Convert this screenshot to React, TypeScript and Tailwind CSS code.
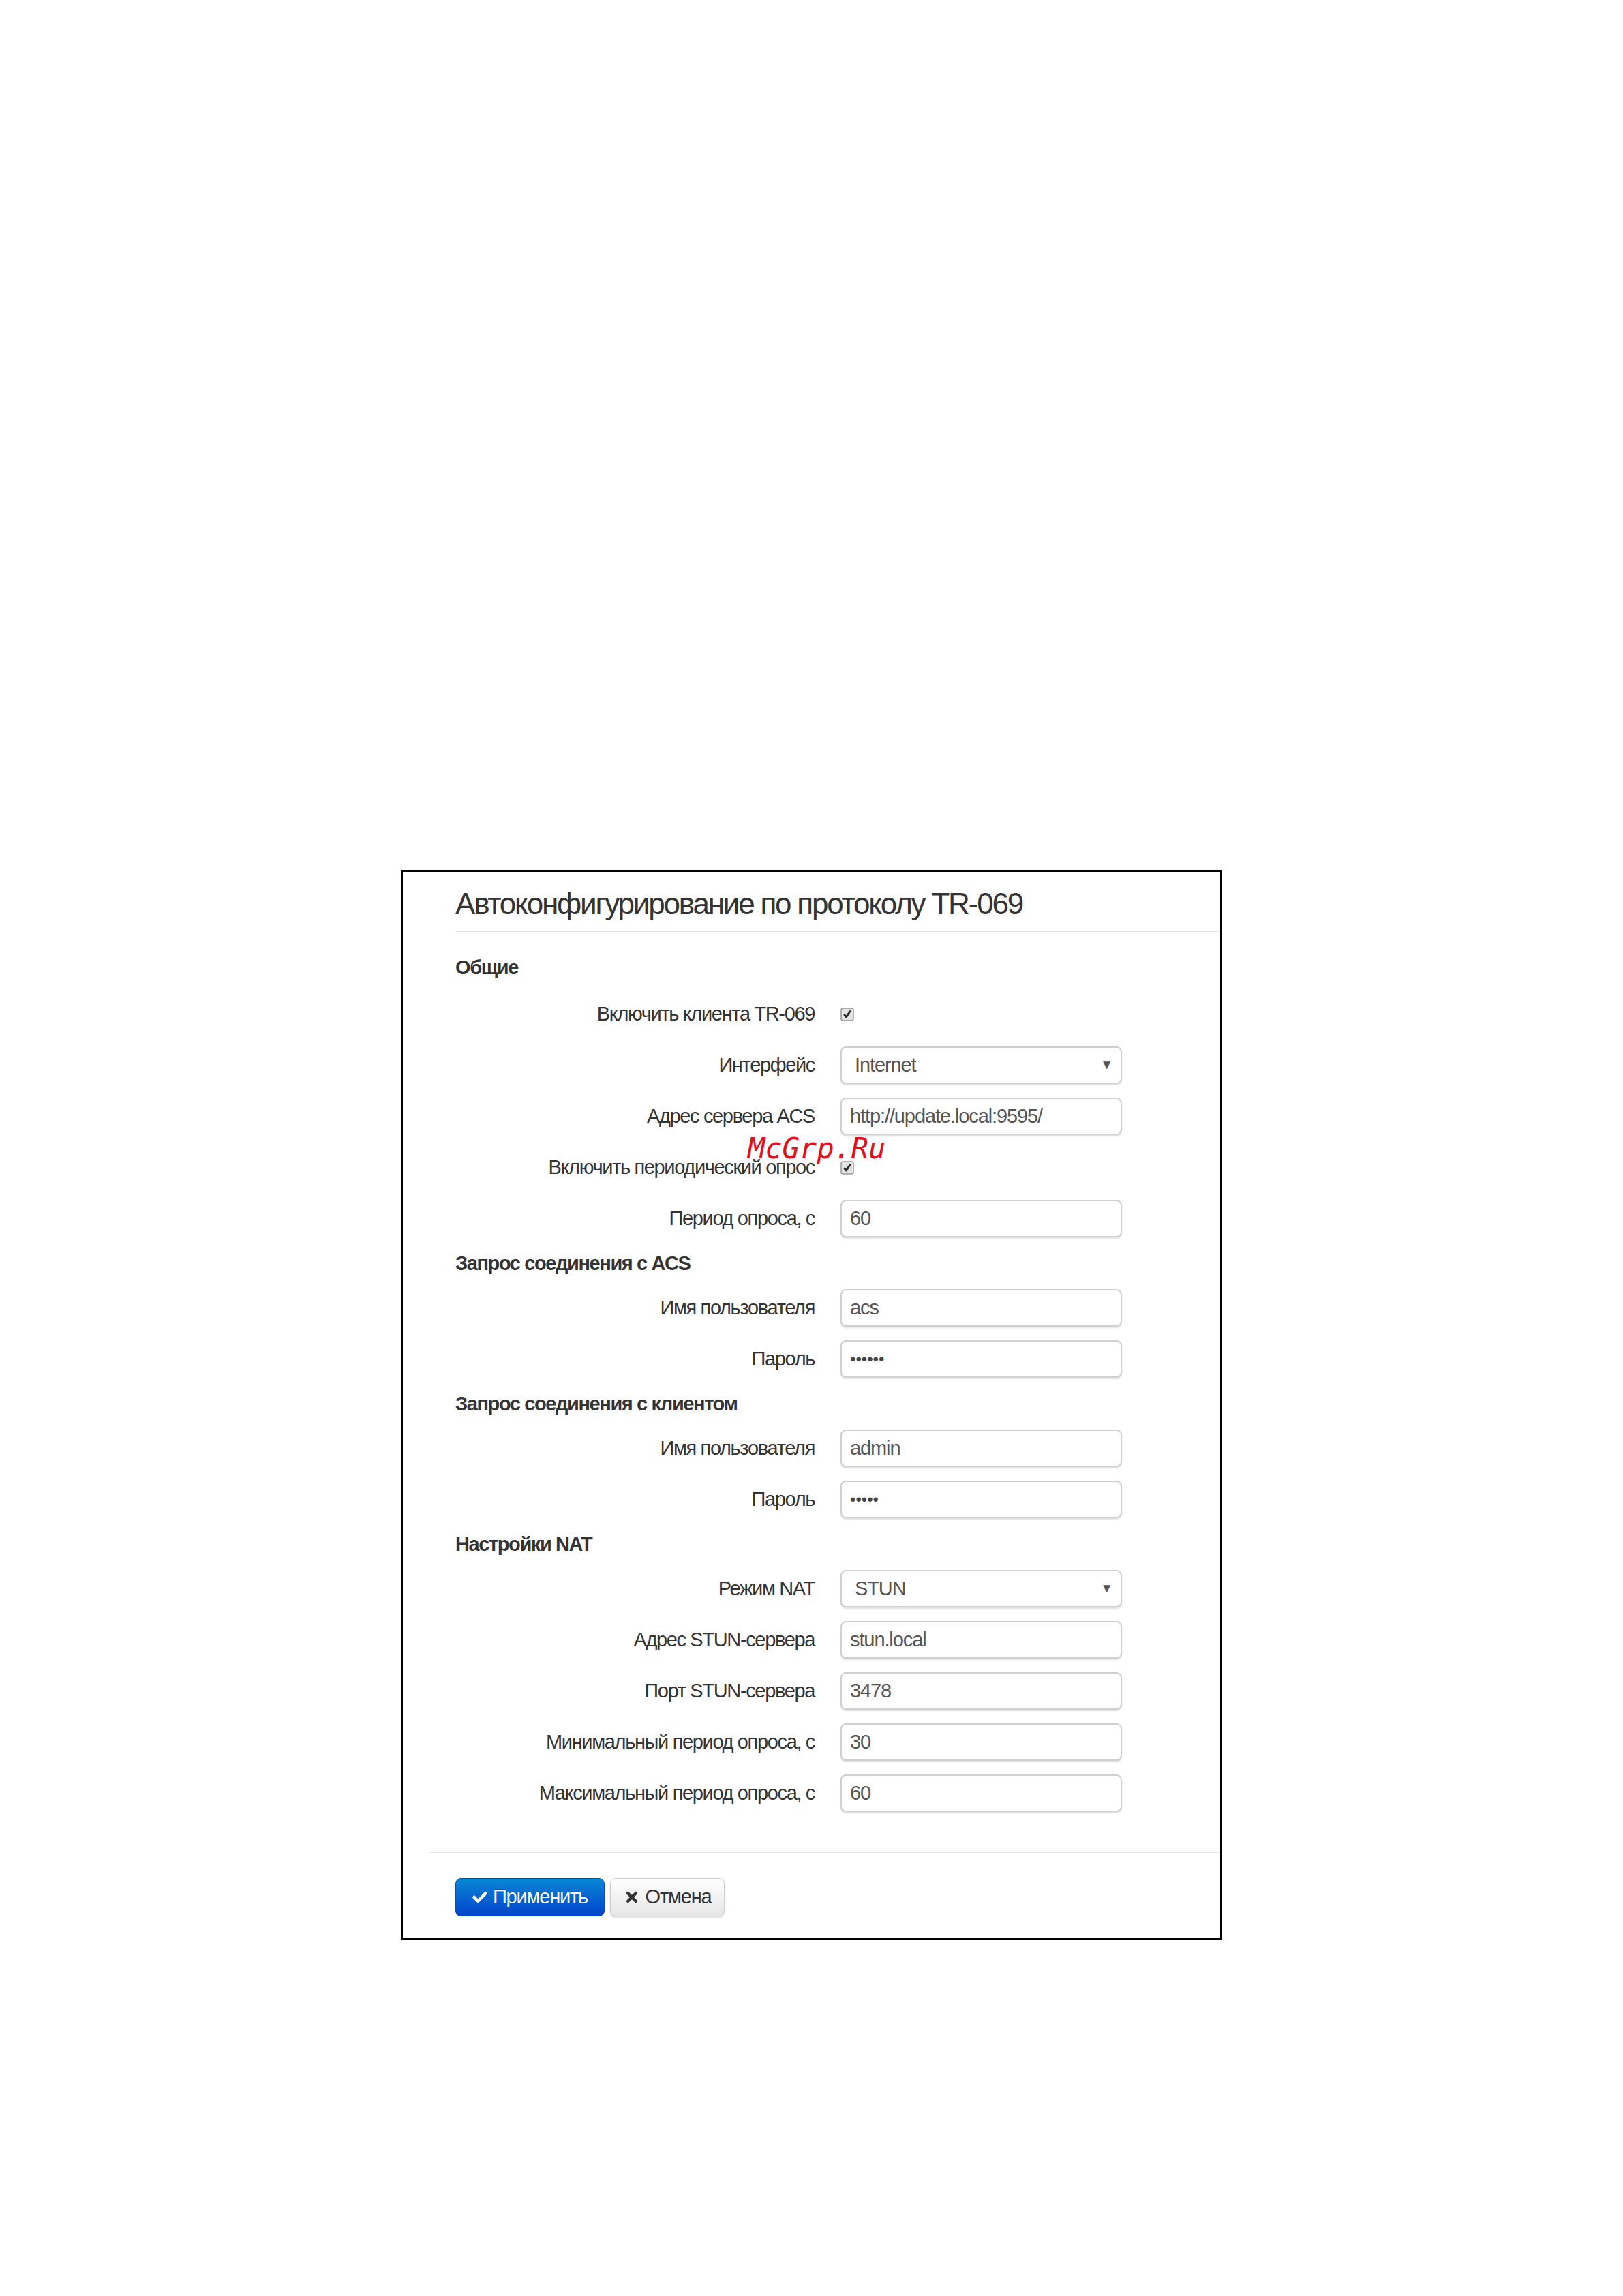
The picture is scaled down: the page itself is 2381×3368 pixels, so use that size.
import { FaCheck, FaTimes } from 'react-icons/fa';

type Field = {
  label: string;
  kind: 'check' | 'select' | 'text' | 'password';
  value?: string;
};

type Section = {
  title: string;
  fields: Field[];
};

const sections: Section[] = [
  {
    title: 'Общие',
    fields: [
      { label: 'Включить клиента TR-069', kind: 'check' },
      { label: 'Интерфейс', kind: 'select', value: 'Internet' },
      { label: 'Адрес сервера ACS', kind: 'text', value: 'http://update.local:9595/' },
      { label: 'Включить периодический опрос', kind: 'check' },
      { label: 'Период опроса, с', kind: 'text', value: '60' },
    ],
  },
  {
    title: 'Запрос соединения с ACS',
    fields: [
      { label: 'Имя пользователя', kind: 'text', value: 'acs' },
      { label: 'Пароль', kind: 'password', value: '••••••' },
    ],
  },
  {
    title: 'Запрос соединения с клиентом',
    fields: [
      { label: 'Имя пользователя', kind: 'text', value: 'admin' },
      { label: 'Пароль', kind: 'password', value: '•••••' },
    ],
  },
  {
    title: 'Настройки NAT',
    fields: [
      { label: 'Режим NAT', kind: 'select', value: 'STUN' },
      { label: 'Адрес STUN-сервера', kind: 'text', value: 'stun.local' },
      { label: 'Порт STUN-сервера', kind: 'text', value: '3478' },
      { label: 'Минимальный период опроса, с', kind: 'text', value: '30' },
      { label: 'Максимальный период опроса, с', kind: 'text', value: '60' },
    ],
  },
];

function CheckBox() {
  return (
    <svg width="20" height="20" viewBox="0 0 20 20">
      <rect x="1" y="1" width="18" height="18" rx="3" fill="#e4e4e4" stroke="#9a9a9a" strokeWidth="1.5" />
      <path d="M6 11 L8.5 14 L14 5.5" fill="none" stroke="#2a2a2a" strokeWidth="3" strokeLinecap="round" strokeLinejoin="round" />
    </svg>
  );
}

function FieldControl({ field }: { field: Field }) {
  if (field.kind === 'check') {
    return (
      <div className="flex h-[55px] items-center">
        <CheckBox />
      </div>
    );
  }

  if (field.kind === 'select') {
    return (
      <div className="flex h-[55px] w-[413px] items-center justify-between rounded-[8px] border-2 border-[#d0d0d0] bg-white pl-[19px] pr-[12px] text-[29px] tracking-[-1.1px] text-[#555] shadow-[0_2px_2px_rgba(0,0,0,0.12)]">
        <span>{field.value}</span>
        <span className="text-[19px] text-[#555]">▼</span>
      </div>
    );
  }

  return (
    <div className="flex h-[55px] w-[413px] items-center rounded-[8px] border-2 border-[#d0d0d0] bg-white px-[12px] text-[29px] tracking-[-1.1px] text-[#555] shadow-[0_2px_2px_rgba(0,0,0,0.12)]">
      {field.kind === 'password' ? (
        <span className="text-[24px] tracking-[0px] text-[#444]">{field.value}</span>
      ) : (
        field.value
      )}
    </div>
  );
}

function App() {
  return (
    <div className="min-h-[3368px] bg-white pt-[1276px] font-['Liberation_Sans',Arial,sans-serif] text-[#333]">
      <section className="relative mx-auto w-[1205px] border-[3px] border-black bg-white">
        <div className="pl-[77px] pt-[21px]">
          <h1 className="m-0 text-[44px] leading-[52px] font-normal tracking-[-2.2px] text-[#333]">
            Автоконфигурирование по протоколу TR-069
          </h1>
          <div className="mt-[13px] h-[2px] bg-[#e8e8e8]" />
        </div>

        <div className="pl-[77px]">
          {sections.map((section, index) => (
            <div key={section.title}>
              <h2 className={`${index === 0 ? 'mt-[33px]' : 'mt-[19px]'} flex h-[40px] items-center text-[29px] font-bold tracking-[-1.4px] text-[#333]`}>
                {section.title}
              </h2>
              {section.fields.map((field, fieldIndex) => (
                <div
                  className={`${fieldIndex === 0 && index > 0 ? 'mt-[17px]' : 'mt-[20px]'} flex items-center gap-[38px]`}
                  key={section.title + field.label}
                >
                  <label className="w-[527px] text-right text-[29px] tracking-[-1.35px] text-[#333]">{field.label}</label>
                  <FieldControl field={field} />
                </div>
              ))}
            </div>
          ))}
        </div>

        <div className="ml-[39px] mt-[58px] h-[2px] bg-[#e8e8e8]" />

        <div className="flex gap-[8px] pb-[32px] pl-[77px] pt-[37px]">
          <button className="flex h-[56px] w-[219px] items-center justify-center gap-[8px] rounded-[8px] border border-[#0a4fb4] bg-[linear-gradient(to_bottom,#0a86d4,#0044cc)] text-[29px] tracking-[-1.2px] text-white [text-shadow:0_-1px_0_rgba(0,0,0,0.25)]" type="button">
            <FaCheck className="h-[22px] w-[22px]" />
            Применить
          </button>
          <button className="flex h-[56px] w-[168px] items-center justify-center gap-[8px] rounded-[8px] border border-[#cfcfcf] bg-[linear-gradient(to_bottom,#ffffff,#e6e6e6)] text-[29px] tracking-[-1.2px] text-[#333] shadow-[0_2px_3px_rgba(0,0,0,0.15)]" type="button">
            <FaTimes className="h-[24px] w-[24px]" />
            Отмена
          </button>
        </div>

        <span className="absolute left-[506px] top-[374px] font-['DejaVu_Sans_Mono',monospace] text-[42px] italic text-[#e01020]">
          McGrp.Ru
        </span>
      </section>
    </div>
  );
}

export default App;
